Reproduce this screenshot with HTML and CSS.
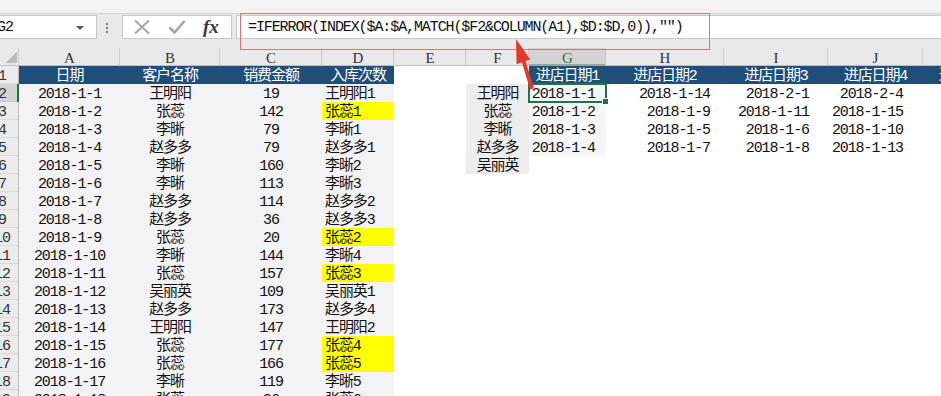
FILE: index.html
```html
<!DOCTYPE html>
<html>
<head>
    <meta charset="utf-8" />
    <title>进店日期 - IFERROR INDEX MATCH</title>
    <link rel="stylesheet" href="styles.css">
</head>
<body>
    <div id="excel">
        <div id="ribbonEdge"></div>

        <div id="formulaBar">
            <div class="nameBox"><span>G2</span><i class="dropArrow"></i></div>
            <div class="grip"><span></span><span></span><span></span></div>
            <div class="fxBox">
                <svg class="cancelIcon" width="18" height="16" viewBox="0 0 18 16">
                    <path d="M2 1.5 L16 14.5 M16 1.5 L2 14.5" stroke="#a8a8a8" stroke-width="2" fill="none" />
                </svg>
                <svg class="enterIcon" width="18" height="16" viewBox="0 0 18 16">
                    <path d="M1.5 8.5 L6.5 13.5 L16.5 2" stroke="#a8a8a8" stroke-width="2.6" fill="none" />
                </svg>
                <span class="fx">fx</span>
            </div>
            <div class="formulaInput">=IFERROR(INDEX($A:$A,MATCH($F2&amp;COLUMN(A1),$D:$D,0)),&quot;&quot;)</div>
        </div>

        <table class="sheet">
            <colgroup>
                <col class="c-rh"><col class="c-a"><col class="c-b"><col class="c-c"><col class="c-d"><col class="c-e">
                <col class="c-f"><col class="c-g"><col class="c-h"><col class="c-i"><col class="c-j"><col class="c-k">
            </colgroup>
            <thead>
                <tr>
                    <th class="corner"><span></span></th>
                    <th>A</th><th>B</th><th>C</th><th>D</th><th>E</th><th>F</th>
                    <th class="sel">G</th><th>H</th><th>I</th><th>J</th><th>K</th>
                </tr>
            </thead>
            <tbody>
                <tr>
                    <th>1</th>
                    <td class="hd">日期</td><td class="hd">客户名称</td><td class="hd">销费金额</td><td class="hd">入库次数</td>
                    <td></td><td></td>
                    <td class="hd">进店日期1</td><td class="hd">进店日期2</td><td class="hd">进店日期3</td><td class="hd">进店日期4</td><td class="hd">进店日期5</td>
                </tr>
                <tr>
                    <th class="sel">2</th>
                    <td class="src">2018-1-1</td><td class="src">王明阳</td><td class="src">19</td><td class="src key">王明阳1</td>
                    <td></td><td class="name">王明阳</td>
                    <td class="date active">2018-1-1</td><td class="date">2018-1-14</td><td class="date">2018-2-1</td><td class="date">2018-2-4</td><td></td>
                </tr>
                <tr>
                    <th>3</th>
                    <td class="src">2018-1-2</td><td class="src">张蕊</td><td class="src">142</td><td class="src key hl">张蕊1</td>
                    <td></td><td class="name">张蕊</td>
                    <td class="date">2018-1-2</td><td class="date">2018-1-9</td><td class="date">2018-1-11</td><td class="date">2018-1-15</td><td></td>
                </tr>
                <tr>
                    <th>4</th>
                    <td class="src">2018-1-3</td><td class="src">李晰</td><td class="src">79</td><td class="src key">李晰1</td>
                    <td></td><td class="name">李晰</td>
                    <td class="date">2018-1-3</td><td class="date">2018-1-5</td><td class="date">2018-1-6</td><td class="date">2018-1-10</td><td></td>
                </tr>
                <tr>
                    <th>5</th>
                    <td class="src">2018-1-4</td><td class="src">赵多多</td><td class="src">79</td><td class="src key">赵多多1</td>
                    <td></td><td class="name">赵多多</td>
                    <td class="date">2018-1-4</td><td class="date">2018-1-7</td><td class="date">2018-1-8</td><td class="date">2018-1-13</td><td></td>
                </tr>
                <tr>
                    <th>6</th>
                    <td class="src">2018-1-5</td><td class="src">李晰</td><td class="src">160</td><td class="src key">李晰2</td>
                    <td></td><td class="name">吴丽英</td>
                    <td></td><td></td><td></td><td></td><td></td>
                </tr>
                <tr>
                    <th>7</th>
                    <td class="src">2018-1-6</td><td class="src">李晰</td><td class="src">113</td><td class="src key">李晰3</td>
                    <td></td><td></td><td></td><td></td><td></td><td></td><td></td>
                </tr>
                <tr>
                    <th>8</th>
                    <td class="src">2018-1-7</td><td class="src">赵多多</td><td class="src">114</td><td class="src key">赵多多2</td>
                    <td></td><td></td><td></td><td></td><td></td><td></td><td></td>
                </tr>
                <tr>
                    <th>9</th>
                    <td class="src">2018-1-8</td><td class="src">赵多多</td><td class="src">36</td><td class="src key">赵多多3</td>
                    <td></td><td></td><td></td><td></td><td></td><td></td><td></td>
                </tr>
                <tr>
                    <th>10</th>
                    <td class="src">2018-1-9</td><td class="src">张蕊</td><td class="src">20</td><td class="src key hl">张蕊2</td>
                    <td></td><td></td><td></td><td></td><td></td><td></td><td></td>
                </tr>
                <tr>
                    <th>11</th>
                    <td class="src">2018-1-10</td><td class="src">李晰</td><td class="src">144</td><td class="src key">李晰4</td>
                    <td></td><td></td><td></td><td></td><td></td><td></td><td></td>
                </tr>
                <tr>
                    <th>12</th>
                    <td class="src">2018-1-11</td><td class="src">张蕊</td><td class="src">157</td><td class="src key hl">张蕊3</td>
                    <td></td><td></td><td></td><td></td><td></td><td></td><td></td>
                </tr>
                <tr>
                    <th>13</th>
                    <td class="src">2018-1-12</td><td class="src">吴丽英</td><td class="src">109</td><td class="src key">吴丽英1</td>
                    <td></td><td></td><td></td><td></td><td></td><td></td><td></td>
                </tr>
                <tr>
                    <th>14</th>
                    <td class="src">2018-1-13</td><td class="src">赵多多</td><td class="src">173</td><td class="src key">赵多多4</td>
                    <td></td><td></td><td></td><td></td><td></td><td></td><td></td>
                </tr>
                <tr>
                    <th>15</th>
                    <td class="src">2018-1-14</td><td class="src">王明阳</td><td class="src">147</td><td class="src key">王明阳2</td>
                    <td></td><td></td><td></td><td></td><td></td><td></td><td></td>
                </tr>
                <tr>
                    <th>16</th>
                    <td class="src">2018-1-15</td><td class="src">张蕊</td><td class="src">177</td><td class="src key hl">张蕊4</td>
                    <td></td><td></td><td></td><td></td><td></td><td></td><td></td>
                </tr>
                <tr>
                    <th>17</th>
                    <td class="src">2018-1-16</td><td class="src">张蕊</td><td class="src">166</td><td class="src key hl">张蕊5</td>
                    <td></td><td></td><td></td><td></td><td></td><td></td><td></td>
                </tr>
                <tr>
                    <th>18</th>
                    <td class="src">2018-1-17</td><td class="src">李晰</td><td class="src">119</td><td class="src key">李晰5</td>
                    <td></td><td></td><td></td><td></td><td></td><td></td><td></td>
                </tr>
                <tr>
                    <th>19</th>
                    <td class="src">2018-1-18</td><td class="src">张蕊</td><td class="src">96</td><td class="src key">张蕊6</td>
                    <td></td><td></td><td></td><td></td><td></td><td></td><td></td>
                </tr>
            </tbody>
        </table>

        <!-- annotation: box round the formula and arrow to G2 -->
        <div class="callout"></div>
        <svg class="arrow" width="1030" height="396" viewBox="0 0 1030 396">
            <line x1="535.3" y1="60" x2="544" y2="89" stroke="#e5362c" stroke-width="4" />
            <polygon points="528,39 542.2,59.6 528.6,64.2" fill="#e5362c" />
        </svg>
    </div>
</body>
</html>
```

FILE: styles.css
```css
body {
    margin: 0;
    padding: 0;
    background: #fff;
    font-family: "Liberation Mono", "Noto Sans CJK SC", monospace;
    font-size: 15px;
    letter-spacing: -1.1px;
    color: #111;
    overflow: hidden;
}

#excel {
    position: relative;
    width: 1030px;
    margin-left: -12px;
}

#ribbonEdge {
    height: 13px;
    background: #f3f3f3;
    border-bottom: 1px solid #d4d4d4;
}

#formulaBar {
    display: flex;
    align-items: flex-start;
    height: 33px;
    padding-top: 1px;
    background: #e9e9e9;
}

.nameBox {
    display: flex;
    align-items: center;
    justify-content: space-between;
    box-sizing: border-box;
    width: 109px;
    height: 24px;
    padding: 1px 12px 0 9px;
    background: #fff;
    border: 1px solid #c8c8c8;
    border-left: none;
}

.dropArrow {
    width: 0;
    height: 0;
    border-left: 4px solid transparent;
    border-right: 4px solid transparent;
    border-top: 4px solid #555;
}

.grip {
    display: flex;
    flex-direction: column;
    align-items: center;
    gap: 2px;
    box-sizing: border-box;
    width: 25px;
    padding: 8px 5px 0 0;
}

.grip span {
    width: 2px;
    height: 2px;
    background: #7a7a7a;
}

.fxBox {
    display: flex;
    align-items: center;
    box-sizing: border-box;
    width: 110px;
    height: 24px;
    padding-left: 10px;
    background: #fff;
    border: 1px solid #c8c8c8;
}

.enterIcon {
    margin-left: 17px;
}

.fx {
    margin-left: 17px;
    font-family: "Liberation Serif", serif;
    font-style: italic;
    font-weight: bold;
    font-size: 19px;
    letter-spacing: 0;
    color: #3a3a3a;
}

.formulaInput {
    flex: 1;
    box-sizing: border-box;
    height: 24px;
    margin-left: 4px;
    padding: 1px 0 0 11px;
    line-height: 22px;
    background: #fff;
    border: 1px solid #c8c8c8;
    border-right: none;
    white-space: nowrap;
}

/* sheet grid */
.sheet {
    border-collapse: separate;
    border-spacing: 0;
    table-layout: fixed;
    width: 1030px;
}

.sheet tr {
    height: 18px;
}

.c-rh { width: 31px; }
.c-a { width: 101px; }
.c-b { width: 100px; }
.c-c { width: 102px; }
.c-d { width: 72px; }
.c-e { width: 72px; }
.c-f { width: 63px; }
.c-g { width: 77px; }
.c-h { width: 118px; }
.c-i { width: 104px; }
.c-j { width: 95px; }
.c-k { width: 95px; }

.sheet thead th {
    padding: 3px 0 0;
    line-height: 15px;
    font-family: "Liberation Serif", serif;
    font-weight: normal;
    font-size: 15px;
    letter-spacing: 0;
    color: #333;
    background: #e9e9e9;
    box-shadow: inset -1px 0 #cdcdcd, inset 0 -1px #bfbfbf;
}

.sheet thead th.sel {
    background: #d3d3d3;
    color: #3f6b52;
    box-shadow: inset -1px 0 #c4c4c4, inset 0 -2px #8fa99a;
}

.sheet th.corner {
    position: relative;
}

.sheet th.corner span {
    position: absolute;
    right: 2px;
    bottom: 3px;
    width: 11px;
    height: 11px;
    background: linear-gradient(135deg, transparent 50%, #bdbdbd 50%);
}

.sheet tbody th {
    padding: 3px 3px 0 0;
    line-height: 15px;
    font-weight: normal;
    color: #333;
    background: #ebebeb;
    box-shadow: inset -1px 0 #bfbfbf, inset 0 -1px #d9d9d9;
    white-space: nowrap;
}

.sheet tbody th.sel {
    background: #d3d3d3;
    box-shadow: inset -2px 0 #217346, inset 0 -1px #c4c4c4;
}

.sheet td {
    padding: 3px 0 0;
    line-height: 15px;
    text-align: center;
    white-space: nowrap;
}

.sheet td.hd {
    background: #1f4e79;
    color: #fff;
}

.sheet td.src {
    background: #f3f3f5;
}

.sheet td.key {
    text-align: left;
    padding-left: 3px;
}

.sheet td.hl {
    background: #ffff00;
}

.sheet td.name {
    background: #ededed;
}

.sheet td.date {
    text-align: right;
}

.sheet td.date:nth-child(8) { padding-right: 11px; background: #f6f6f6; }
.sheet td.date:nth-child(9) { padding-right: 14px; }
.sheet td.date:nth-child(10) { padding-right: 19px; }
.sheet td.date:nth-child(11) { padding-right: 20px; }

.sheet td.active {
    position: relative;
    outline: 2px solid #217346;
    outline-offset: -1px;
}

.sheet td.active::after {
    content: '';
    position: absolute;
    right: -3px;
    bottom: -3px;
    width: 5px;
    height: 5px;
    background: #217346;
    border: 1px solid #fff;
}

.callout {
    position: absolute;
    top: 13px;
    left: 252px;
    box-sizing: border-box;
    width: 470px;
    height: 37px;
    border: 1.5px solid #d9727c;
}

.arrow {
    position: absolute;
    top: 0;
    left: 0;
    pointer-events: none;
}
```
